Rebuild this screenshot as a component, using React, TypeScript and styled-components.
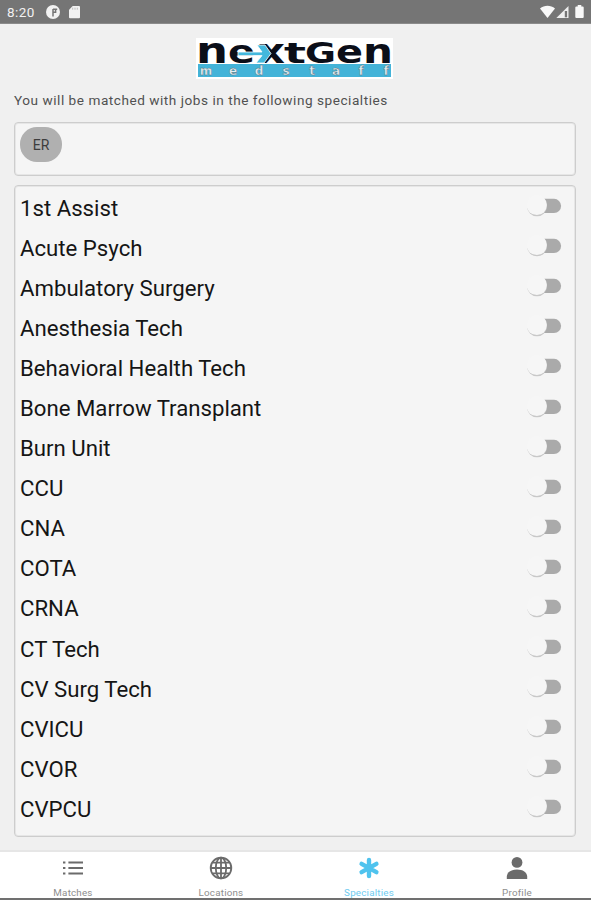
import React, { useState } from "react";
import styled, { createGlobalStyle } from "styled-components";

const GlobalStyle = createGlobalStyle`
  * { box-sizing: border-box; }
  body { margin: 0; background: #f0f0f0; font-family: Roboto, "Liberation Sans", sans-serif; }
`;

const Screen = styled.div`
  width: 591px;
  height: 900px;
  display: flex;
  flex-direction: column;
  overflow: hidden;
  background: #f0f0f0;
`;

const StatusBar = styled.header`
  height: 24px;
  flex: none;
  display: flex;
  justify-content: space-between;
  background: #757575;
  border-bottom: 1px solid #8b8b8b;
  color: #f2f2f2;
`;

const StatusGroup = styled.div<{ $pad: string }>`
  display: flex;
  align-items: center;
  padding: ${(p) => p.$pad};
`;

const Clock = styled.span`
  width: 39px;
  font-size: 13.5px;
  line-height: 16px;
  letter-spacing: 0.45px;
`;

const Main = styled.main`
  flex: 1;
  min-height: 0;
  display: flex;
  flex-direction: column;
  padding: 14px 15px 14px 14px;
`;

const LogoBox = styled.div`
  height: 41px;
  margin-left: 182px;
  svg { display: block; overflow: visible; }
`;

const Intro = styled.p`
  margin: 12px 0 13px;
  font-size: 13.6px;
  line-height: 18px;
  letter-spacing: 0.53px;
  color: #515151;
  white-space: nowrap;
`;

const Panel = styled.section<{ $height: number }>`
  flex: none;
  height: ${(p) => p.$height}px;
  border: 1px solid #cdcdcd;
  border-radius: 4px;
  box-shadow: inset 0 0 0 1px #e6e6e6;
  background: #f5f5f5;
  padding: 0 14px 0 5px;
`;

const Chip = styled.span`
  display: flex;
  align-items: center;
  justify-content: center;
  width: 42px;
  height: 35px;
  margin-top: 4px;
  border-radius: 17px;
  background: #b0b0b0;
  color: #3d3d3d;
  font-size: 14px;
`;

const List = styled.ul`
  list-style: none;
  margin: 0;
  padding: 1px 0 0;
`;

const Row = styled.li`
  height: 40.1px;
  display: flex;
  align-items: center;
  justify-content: space-between;
`;

const RowLabel = styled.span`
  padding-top: 1px;
  font-size: 22.2px;
  line-height: 26px;
  letter-spacing: 0;
  color: #151515;
  white-space: nowrap;
`;

const Toggle = styled.button<{ $on: boolean }>`
  width: 35px;
  height: 22px;
  padding: 0;
  border: 0;
  background: none;
  margin: -2px -1px 0 0;
  transform: ${(p) => (p.$on ? "scaleX(-1)" : "none")};
  svg { display: block; }
`;

const Gap = styled.div`
  height: 9px;
  flex: none;
`;

const TabBar = styled.nav`
  height: 50px;
  flex: none;
  display: grid;
  grid-template-columns: repeat(4, 148px);
  margin-right: -1px;
  margin-left: -1px;
  background: #fff;
  border-top: 2px solid #e6e6e6;
  border-bottom: 2px solid #707070;
`;

const Tab = styled.div<{ $active?: boolean }>`
  display: flex;
  flex-direction: column;
  align-items: center;
  padding-top: 3px;
  color: ${(p) => (p.$active ? "#4fc3ee" : "#6b6b6b")};
  svg { display: block; flex: none; }
`;

const TabLabel = styled.span<{ $active?: boolean }>`
  margin-top: 6px;
  font-size: 9.8px;
  line-height: 12px;
  letter-spacing: 0.2px;
  color: ${(p) => (p.$active ? "#6fcbf0" : "#8e8e8e")};
`;

const specialties = [
  "1st Assist", "Acute Psych", "Ambulatory Surgery", "Anesthesia Tech",
  "Behavioral Health Tech", "Bone Marrow Transplant", "Burn Unit", "CCU",
  "CNA", "COTA", "CRNA", "CT Tech", "CV Surg Tech", "CVICU", "CVOR", "CVPCU",
];

const logoLetters = [
  { c: "n", x: 0, w: 32, s: 36 },
  { c: "e", x: 32, w: 27, s: 32 },
  { c: "x", x: 62, w: 27, s: 33 },
  { c: "t", x: 88, w: 22, s: 29 },
  { c: "G", x: 109, w: 31, s: 29 },
  { c: "e", x: 140, w: 27, s: 32 },
  { c: "n", x: 167, w: 30, s: 33 },
];

const staffLetters: [string, number][] = [
  ["m", 10], ["e", 37], ["d", 63], ["s", 90], ["t", 116], ["a", 140], ["f", 165], ["f", 190],
];

const Logo = () => (
  <svg width="197" height="41" viewBox="0 0 197 41" role="img">
    <rect width="197" height="41" fill="#fff" />
    <g fontFamily="'DejaVu Sans', sans-serif" fontWeight="700" fill="#0b0e18">
      {logoLetters.map((l, i) => (
        <text key={i} x={l.x} y="24.5" fontSize={l.s} textLength={l.w} lengthAdjust="spacingAndGlyphs">
          {l.c}
        </text>
      ))}
    </g>
    <path d="M42 14h24l-5-7h8l6 8.5-7 9.5h-8l6-7.4H42z" fill="#43b8dd" stroke="#fff" strokeWidth="0.8" />
    <rect x="2" y="26" width="193" height="13" fill="#43b3d8" />
    <g fontFamily="'DejaVu Sans', sans-serif" fontWeight="700" fontSize="12" textAnchor="middle" fill="#e3eff3" stroke="#526e7b" strokeWidth="0.4">
      {staffLetters.map(([c, x], i) => (
        <text key={i} x={x} y="37">{c}</text>
      ))}
    </g>
  </svg>
);

const Switch = () => {
  const [on, setOn] = useState(false);
  return (
    <Toggle $on={on} onClick={() => setOn(!on)}>
      <svg width="35" height="22" viewBox="0 0 35 22">
        <path d="M12 3.8h15a7.1 7.1 0 0 1 0 14.2H12z" fill="#aaa" />
        <circle cx="10" cy="11.4" r="9.9" fill="#c8c8c8" />
        <circle cx="9.8" cy="10" r="10.1" fill="#f6f6f6" />
      </svg>
    </Toggle>
  );
};

const MatchesIcon = () => (
  <svg width="24" height="26" viewBox="0 0 24 26" stroke="currentColor" strokeWidth="2">
    <path d="M2 7.4h2.4M2 13h2.4M2 18.6h2.4M7.4 7.4H22M7.4 13H22M7.4 18.6H22" />
  </svg>
);

const GlobeIcon = () => (
  <svg width="24" height="26" viewBox="0 0 24 26" fill="none" stroke="currentColor" strokeWidth="1.8">
    <circle cx="12" cy="13" r="10.3" />
    <ellipse cx="12" cy="13" rx="5.2" ry="10.3" />
    <path d="M12 2.7v20.6M1.7 13h20.6M3.4 7.6h17.2M3.4 18.4h17.2" />
  </svg>
);

const AsteriskIcon = () => (
  <svg width="24" height="26" viewBox="0 0 24 26" stroke="currentColor" strokeWidth="4.4" strokeLinecap="round">
    <path d="M12 5v16M4.6 8.9l14.8 8.2M4.6 17.1l14.8-8.2" />
  </svg>
);

const ProfileIcon = () => (
  <svg width="24" height="26" viewBox="0 0 24 26" fill="currentColor">
    <circle cx="12" cy="7.4" r="5.4" />
    <path d="M1.8 24v-2.2c0-4.7 4.5-7.4 10.2-7.4s10.2 2.7 10.2 7.4V24z" />
  </svg>
);

const tabs = [
  { label: "Matches", Icon: MatchesIcon },
  { label: "Locations", Icon: GlobeIcon },
  { label: "Specialties", Icon: AsteriskIcon, active: true },
  { label: "Profile", Icon: ProfileIcon },
];

export default function App() {
  return (
    <>
      <GlobalStyle />
      <Screen>
        <StatusBar>
          <StatusGroup $pad="1px 0 0 7px">
            <Clock>8:20</Clock>
            <svg width="36" height="16" viewBox="0 0 36 16">
              <circle cx="7" cy="8" r="7" fill="#f2f2f2" />
              <path d="M7 12.4V5M7 5.2h4.2M9.6 5v3.2H7" fill="none" stroke="#757575" strokeWidth="1.5" />
              <path d="M26.7 2H33a1 1 0 0 1 1 1v10.3a1 1 0 0 1-1 1h-9a1 1 0 0 1-1-1V5.7z" fill="#f2f2f2" />
              <path d="M26.7 3.7v2M29 3.7v2M31.3 3.7v2" stroke="#b0b0b0" strokeWidth=".8" />
            </svg>
          </StatusGroup>
          <StatusGroup $pad="0 6px 0 0">
            <svg width="45" height="16" viewBox="0 0 45 16" fill="#f8f8f8">
              <path d="M0 4.5C4.3.8 10.7.8 15 4.5L7.5 14z" />
              <path d="M16.3 14 28.5 2v12z" fill="#eee" />
              <path d="M24.8 7v6.3h2.3V7z" fill="#757575" />
              <path d="M37.7 1h3.6v1.5h1.4a1 1 0 0 1 1 1V13a1 1 0 0 1-1 1h-6.4a1 1 0 0 1-1-1V3.5a1 1 0 0 1 1-1h1.4z" />
            </svg>
          </StatusGroup>
        </StatusBar>
        <Main>
          <LogoBox><Logo /></LogoBox>
          <Intro>You will be matched with jobs in the following specialties</Intro>
          <Panel $height={54}><Chip>ER</Chip></Panel>
          <Gap />
          <Panel $height={652}>
            <List>
              {specialties.map((name) => (
                <Row key={name}>
                  <RowLabel>{name}</RowLabel>
                  <Switch />
                </Row>
              ))}
            </List>
          </Panel>
        </Main>
        <TabBar>
          {tabs.map(({ label, Icon, active }) => (
            <Tab key={label} $active={active}>
              <Icon />
              <TabLabel $active={active}>{label}</TabLabel>
            </Tab>
          ))}
        </TabBar>
      </Screen>
    </>
  );
}
